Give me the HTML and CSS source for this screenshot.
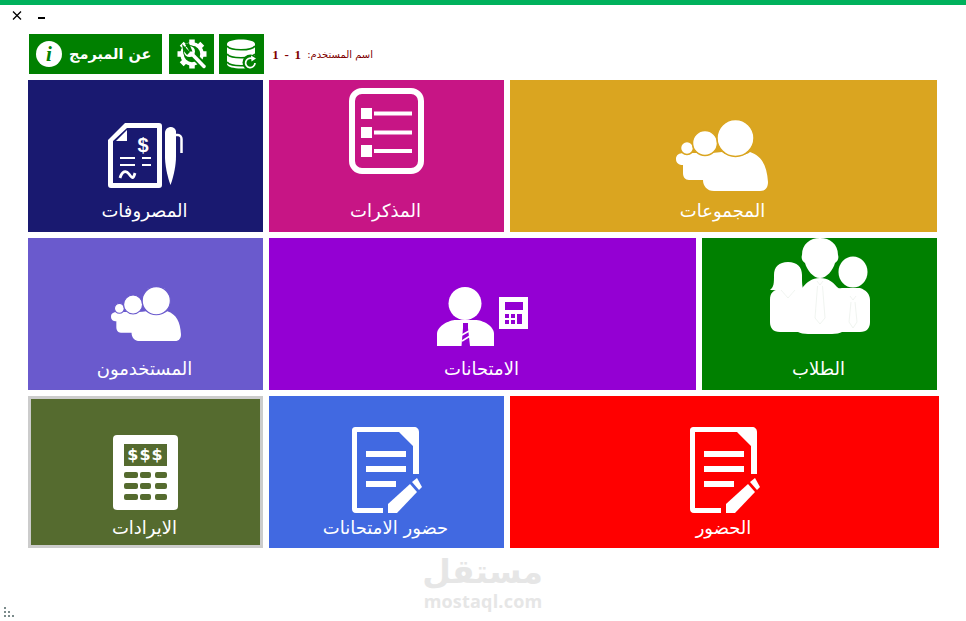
FILE: index.html
```html
<!DOCTYPE html>
<html lang="ar">
<head>
<meta charset="utf-8">
<title>mostaql</title>
<link rel="stylesheet" href="styles.css">
</head>
<body>
<svg class="sprite" aria-hidden="true">
  <symbol id="people" viewBox="0 0 92 71">
    <path fill="#fff" d="M0 39C0 35 3 33 8 33H24C32 33 40 33 46 32C52 37 68 37 74 32C86 36 91 46 92 62C92 67 90 71 84 71H38C31 71 27 66 27 60H13C9 60 7 57 7 53V45C3 45 0 43 0 39Z"/>
    <circle cx="11" cy="28" r="6.500" fill="#fff" stroke="currentColor" stroke-width="1.500"/>
    <circle cx="29" cy="23" r="12.500" fill="#fff" stroke="currentColor" stroke-width="1.500"/>
    <circle cx="59.500" cy="18" r="18.500" fill="#fff" stroke="currentColor" stroke-width="1.500"/>
  </symbol>
  <symbol id="docedit" viewBox="0 0 70 86">
    <path fill="#fff" d="M4 0H62C65 0 67 2 67 5V47H61V19L47 5H5V81H31V86H4C1 86 0 84 0 82V4C0 1 1 0 4 0Z"/>
    <rect x="14" y="24" width="40" height="6" fill="#fff"/>
    <rect x="14" y="39" width="40" height="6" fill="#fff"/>
    <rect x="14" y="54" width="30" height="6" fill="#fff"/>
    <path fill="#fff" d="M36 86V77L58 57L65 65L45 86Z"/>
    <path fill="#fff" d="M60 55L65 51L70 60L67 63Z"/>
  </symbol>
</svg>

<div class="accent"></div>
<div class="controls">
  <svg class="ctl-x" viewBox="0 0 10 9"><path d="M1 .5L9 8.500M9 .5L1 8.500" stroke="#000" stroke-width="1.300" fill="none"/></svg>
  <span class="ctl-min"></span>
</div>

<div class="toolbar">
  <div class="btn btn-about">
    <span class="info">i</span>
    <span class="about-text">عن المبرمج</span>
  </div>
  <div class="btn btn-icon">
    <svg class="i30" viewBox="0 0 30 30">
      <g stroke="#fff" fill="none">
        <circle cx="15" cy="15" r="10" stroke-width="3.500"/>
        <path stroke-width="5.500" d="M15 .5V6M15 24V29.500M.5 15H6M24 15H29.500M4.700 4.700L8.500 8.500M21.500 21.500L25.300 25.300M25.300 4.700L21.500 8.500M8.500 21.500L4.700 25.300"/>
      </g>
      <path d="M13 13L27 27" stroke="#008000" stroke-width="7"/>
      <circle cx="12.500" cy="12.500" r="6.500" fill="#008000"/>
      <path d="M13 13L27 27.500" stroke="#fff" stroke-width="3.500" stroke-linecap="round"/>
      <circle cx="12.500" cy="12.500" r="5.500" fill="#fff"/>
      <path d="M5 5L13 13L10 16L6 11Z M12 4L15.500 12.500L12.500 12.500L8 5Z" fill="#008000"/>
    </svg>
  </div>
  <div class="btn btn-icon">
    <svg class="i30" viewBox="0 0 30 30">
      <path fill="#fff" d="M0 5C0 -1 28 -1 28 5V25C28 31 0 31 0 25Z"/>
      <path fill="none" stroke="#008000" stroke-width="1.700" d="M0 7C3 12 25 12 28 7M0 15C3 20 25 20 28 15M0 23C3 28 25 28 28 23"/>
      <circle cx="23.500" cy="23.500" r="8" fill="#008000"/>
      <path fill="none" stroke="#fff" stroke-width="1.700" d="M28 24A4.700 4.700 0 1 1 25 19.500"/>
      <path fill="#fff" d="M24 16.500L29 19.500L24.500 22.500Z"/>
    </svg>
  </div>
  <div class="user"><span class="user-label">اسم المستخدم:</span><b class="user-id">1 - 1</b></div>
</div>

<main class="board">
  <div class="row row-a">
    <div class="tile navy">
      <svg class="icon ic-exp" viewBox="0 0 75 65">
        <path fill="#fff" fill-rule="evenodd" d="M17 0H51C53 0 54 1 54 3V62C54 64 53 65 51 65H3C1 65 0 64 0 62V17ZM19 5L5 18V60H49V5Z"/>
        <path fill="#fff" d="M8 18H19V7Z"/>
        <text x="35" y="29" class="dollar">$</text>
        <path stroke="#fff" stroke-width="2" fill="none" d="M12 35H27M34 35H43M12 42H27M34 42H43"/>
        <path stroke="#fff" stroke-width="2.800" fill="none" d="M12 55C14 48 18 47 21 51S25 57 27 50"/>
        <path fill="#fff" d="M57 10C57 6 60 4 63 4C65 4 67 5 68 8V34C68 41 66 53 62.500 62C59 53 57 41 57 34Z"/>
        <path stroke="#fff" stroke-width="2.500" fill="none" d="M66 12H70C72 12 73.500 14 73.500 16V30"/>
      </svg>
      <span class="label">المصروفات</span>
    </div>
    <div class="tile magenta">
      <svg class="icon ic-notes" viewBox="0 0 75 86">
        <rect x="3" y="3" width="69" height="80" rx="10" fill="none" stroke="#fff" stroke-width="6"/>
        <rect x="12" y="20" width="11" height="11" fill="#fff"/>
        <rect x="12" y="39" width="11" height="11" fill="#fff"/>
        <rect x="12" y="57" width="11" height="12" fill="#fff"/>
        <path stroke="#fff" stroke-width="4" d="M25 25.500H63M25 44.500H63M25 63H63"/>
      </svg>
      <span class="label">المذكرات</span>
    </div>
    <div class="tile gold">
      <svg class="icon ic-groups"><use href="#people"/></svg>
      <span class="label">المجموعات</span>
    </div>
  </div>

  <div class="row row-b">
    <div class="tile slate">
      <svg class="icon ic-users"><use href="#people"/></svg>
      <span class="label">المستخدمون</span>
    </div>
    <div class="tile violet">
      <svg class="icon ic-exams" viewBox="0 0 91 59">
        <circle cx="28" cy="16.500" r="16.500" fill="#fff"/>
        <path fill="#fff" d="M0 59V47C0 39 12 33 19 33H38C46 33 57 39 57 47V59Z"/>
        <path fill="currentColor" d="M26 36H31L31 41L33 59H24.500L26 41Z"/>
        <path stroke="#fff" stroke-width="1.500" d="M25 48L32 44M25 54L33 49"/>
        <path fill="#fff" fill-rule="evenodd" d="M62 10H91V42H62ZM68 15V23H86V15ZM68 27V31H72V27ZM74 27V31H78V27ZM80 27V37H85V27ZM68 33V37H72V33ZM74 33V37H78V33Z"/>
      </svg>
      <span class="label">الامتحانات</span>
    </div>
    <div class="tile green">
      <svg class="icon ic-students" viewBox="0 0 100 96">
        <path fill="#fff" d="M0 52C4 49 4 45 4 37C4 29 9 24 18 24C27 24 32 29 32 37C32 45 32 49 34 53Z"/>
        <ellipse cx="83" cy="34" rx="14.500" ry="15.500" fill="#fff"/>
        <path fill="#fff" d="M0 62C0 54 4 52 10 51H26C30 53 31 52 33 49C37 44 42 40 50 40C58 40 63 44 67 49C69 51 70 50 72 50H90C96 52 100 56 100 62V84C100 90 97 94 90 94H72C70 95 66 96 62 96H38C34 96 30 95 28 94H10C3 94 0 90 0 84Z"/>
        <path fill="#fff" d="M32 17C32 6 40 0 50 0C60 0 68 6 68 17C69 20 68 23 65 25C63 32 57 40 50 40C43 40 37 32 35 25C32 23 31 20 32 17Z"/>
        <path class="faint" d="M47 43L50 47L53 43M47.500 48L45 80L50 86L55 80L52.500 48M86 58L83 62L80 58M81 64L79 84L83 90L87 84L85 64M11 52L18 60L25 52"/>
      </svg>
      <span class="label">الطلاب</span>
    </div>
  </div>

  <div class="row row-c">
    <div class="tile olive">
      <svg class="icon ic-income" viewBox="0 0 65 75">
        <rect width="65" height="75" rx="4" fill="#fff"/>
        <rect x="11" y="9" width="43" height="22" fill="#556b2f"/>
        <text x="32.500" y="25" class="money">$$$</text>
        <g fill="#556b2f">
          <rect x="11" y="37" width="14" height="6" rx="2"/>
          <rect x="27" y="37" width="11" height="6" rx="2"/>
          <rect x="42" y="37" width="12" height="6" rx="2"/>
          <rect x="11" y="48" width="14" height="6" rx="2"/>
          <rect x="27" y="48" width="11" height="6" rx="2"/>
          <rect x="42" y="48" width="12" height="6" rx="2"/>
          <rect x="11" y="59" width="14" height="6" rx="2"/>
          <rect x="27" y="59" width="11" height="6" rx="2"/>
          <rect x="42" y="59" width="12" height="6" rx="2"/>
        </g>
      </svg>
      <span class="label">الايرادات</span>
    </div>
    <div class="tile royal">
      <svg class="icon ic-doc"><use href="#docedit"/></svg>
      <span class="label">حضور الامتحانات</span>
    </div>
    <div class="tile red">
      <svg class="icon ic-doc"><use href="#docedit"/></svg>
      <span class="label">الحضور</span>
    </div>
  </div>
</main>

<div class="watermark">
  <div class="wm-ar">مستقل</div>
  <div class="wm-en">mostaql.com</div>
</div>

<svg class="grip" viewBox="0 0 12 10" aria-hidden="true">
  <path fill="#7b8b8b" d="M0 0h2v2H0zM0 4h2v2H0zM4 4h2v2H4zM0 8h2v2H0zM4 8h2v2H4zM8 8h2v2H8z"/>
</svg>
</body>
</html>
```

FILE: styles.css
```css
html, body {
  margin: 0;
  height: 100%;
  background: #fff;
  overflow: hidden;
}
body {
  position: relative;
  font-family: "DejaVu Sans", "Noto Sans", sans-serif;
}
.sprite {
  position: absolute;
  width: 0;
  height: 0;
}
.accent {
  height: 5px;
  background: #00b15c;
}
.controls {
  height: 29px;
  padding-left: 12px;
  display: flex;
  align-items: flex-start;
}
.ctl-x {
  width: 10px;
  height: 9px;
  margin-top: 6px;
}
.ctl-min {
  width: 7px;
  height: 2px;
  background: #000;
  margin: 12px 0 0 16px;
}
.toolbar {
  height: 40px;
  padding-left: 29px;
  display: flex;
  align-items: stretch;
}
.btn {
  background: #008000;
  display: flex;
  align-items: center;
  justify-content: center;
}
.btn-about {
  width: 133px;
  margin-right: 7px;
  padding-left: 7px;
  box-sizing: border-box;
  justify-content: flex-start;
  gap: 7px;
}
.info {
  width: 26px;
  height: 26px;
  border-radius: 50%;
  background: #fff;
  color: #008000;
  font: italic bold 21px/26px "Liberation Serif", serif;
  text-align: center;
}
.about-text {
  color: #fff;
  font: bold 14.5px/1 "DejaVu Sans", sans-serif;
  direction: rtl;
  white-space: nowrap;
}
.btn-icon {
  width: 45px;
  margin-right: 5px;
}
.i30 {
  width: 30px;
  height: 30px;
}
.user {
  margin: 1px 0 0 5px;
  align-self: center;
  display: flex;
  flex-direction: row-reverse;
  gap: 5px;
  align-items: center;
  width: 99px;
  color: #800000;
  white-space: nowrap;
}
.user-label {
  font: 10px "DejaVu Sans", sans-serif;
  direction: rtl;
}
.user-id {
  font: bold 13px "Liberation Serif", serif;
  letter-spacing: 1.2px;
}
.board {
  margin: 6px 0 0 28px;
  display: flex;
  flex-direction: column;
  gap: 6px;
}
.row {
  display: grid;
  gap: 6px;
  height: 152px;
}
.row-a { grid-template-columns: 235px 235px 427px; }
.row-b { grid-template-columns: 235px 427px 235px; }
.row-c { grid-template-columns: 235px 235px 429px; }
.tile {
  display: flex;
  flex-direction: column;
  align-items: center;
  box-sizing: border-box;
  overflow: hidden;
}
.label {
  margin: auto 2px 10px 0;
  color: #fff;
  font-size: 18px;
  line-height: 22px;
  direction: rtl;
  white-space: nowrap;
}
.navy { background: #191970; color: #191970; }
.magenta { background: #c71585; color: #c71585; }
.gold { background: #daa520; color: #daa520; }
.slate { background: #6a5acd; color: #6a5acd; }
.violet { background: #9400d3; color: #9400d3; }
.green { background: #008000; color: #008000; }
.olive { background: #556b2f; color: #556b2f; border: 3px solid #ccc; }
.royal { background: #4169e1; color: #4169e1; }
.red { background: #f00; color: #f00; }
.icon { flex: none; }
.ic-exp { width: 75px; height: 65px; margin-top: 43px; }
.ic-notes { width: 75px; height: 86px; margin-top: 8px; }
.ic-groups { width: 92px; height: 71px; margin-top: 40px; margin-right: 3px; }
.ic-users { width: 70px; height: 54px; margin-top: 49px; }
.ic-exams { width: 91px; height: 59px; margin-top: 49px; }
.ic-students { width: 100px; height: 96px; }
.ic-income { width: 65px; height: 75px; margin-top: 36px; }
.ic-doc { width: 70px; height: 86px; margin-top: 31px; }
.row-c .label { margin-bottom: 9px; }
.row-c .olive .label { margin-bottom: 6px; }
.dollar {
  fill: #fff;
  font: bold 20px "Liberation Sans", sans-serif;
  text-anchor: middle;
}
.money {
  fill: #fff;
  font: bold 16px "DejaVu Sans", sans-serif;
  text-anchor: middle;
  letter-spacing: 1px;
}
.faint {
  fill: none;
  stroke: #e9efe9;
  stroke-width: .7;
}
.watermark {
  width: 120px;
  margin: 0 0 0 423px;
  text-align: center;
  color: #e6e6e6;
}
.wm-ar {
  font: bold 33px/36px "DejaVu Sans", sans-serif;
  direction: rtl;
  white-space: nowrap;
  margin-top: 6px;
}
.wm-en {
  font: bold 18px/18px "Open Sans", sans-serif;
  white-space: nowrap;
  letter-spacing: .2px;
  margin-top: 2px;
}
.grip {
  position: absolute;
  left: 4px;
  bottom: 4px;
  width: 12px;
  height: 10px;
}
```
